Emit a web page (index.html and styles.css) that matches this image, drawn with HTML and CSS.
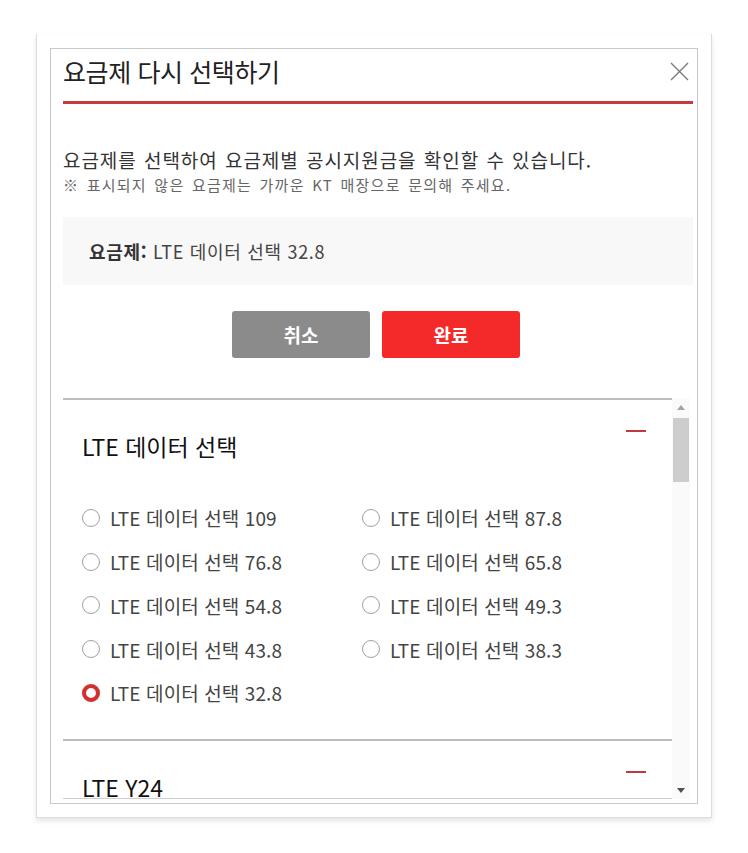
FILE: index.html
```html
<!DOCTYPE html>
<html lang="ko">
<head>
<meta charset="utf-8">
<title>요금제 다시 선택하기</title>
<link rel="stylesheet" href="styles.css">
</head>
<body>
<div class="frame">
  <div class="dialog">
    <div class="dlg-head">
      <h1 class="dlg-title">요금제 다시 선택하기</h1>
      <button class="dlg-close" aria-label="닫기">
        <svg width="19" height="19" viewBox="0 0 19 19"><path d="M1 1 L18 18 M18 1 L1 18" stroke="#7a7a7a" stroke-width="1.4" fill="none"/></svg>
      </button>
    </div>
    <div class="dlg-rule"></div>
    <div class="intro">
      <p class="intro-main">요금제를 선택하여 요금제별 공시지원금을 확인할 수 있습니다.</p>
      <p class="intro-note">※ 표시되지 않은 요금제는 가까운 KT 매장으로 문의해 주세요.</p>
    </div>
    <div class="current"><strong>요금제:</strong> LTE 데이터 선택 32.8</div>
    <div class="actions">
      <button class="btn btn-cancel">취소</button>
      <button class="btn btn-done">완료</button>
    </div>
    <div class="plans">
      <div class="plans-body">
        <section class="group">
          <div class="group-head">
            <h2 class="group-title">LTE 데이터 선택</h2>
            <span class="toggle"></span>
          </div>
          <ul class="options">
            <li class="option"><span class="radio"></span>LTE 데이터 선택 109</li>
            <li class="option"><span class="radio"></span>LTE 데이터 선택 87.8</li>
            <li class="option"><span class="radio"></span>LTE 데이터 선택 76.8</li>
            <li class="option"><span class="radio"></span>LTE 데이터 선택 65.8</li>
            <li class="option"><span class="radio"></span>LTE 데이터 선택 54.8</li>
            <li class="option"><span class="radio"></span>LTE 데이터 선택 49.3</li>
            <li class="option"><span class="radio"></span>LTE 데이터 선택 43.8</li>
            <li class="option"><span class="radio"></span>LTE 데이터 선택 38.3</li>
            <li class="option"><span class="radio is-checked"></span>LTE 데이터 선택 32.8</li>
          </ul>
        </section>
        <section class="group">
          <div class="group-head">
            <h2 class="group-title">LTE Y24</h2>
            <span class="toggle"></span>
          </div>
        </section>
      </div>
      <div class="scrollbar">
        <div class="sb-btn sb-up"></div>
        <div class="sb-track"><div class="sb-thumb"></div></div>
        <div class="sb-btn sb-down"></div>
      </div>
    </div>
  </div>
</div>
</body>
</html>
```

FILE: styles.css
```css
* { box-sizing: border-box; }
html, body { margin: 0; padding: 0; background: #fff; }
body {
  font-family: "Noto Sans CJK KR", "Noto Sans", sans-serif;
  color: #333;
  width: 748px;
  height: 853px;
  overflow: hidden;
}
.frame {
  margin: 34px 0 0 36px;
  width: 676px;
  padding: 14px 13px 13px 13px;
  border: 1px solid #dcdcdc;
  border-top: none;
  box-shadow: 0 3px 5px rgba(0,0,0,0.10);
  background: #fff;
}
.dialog {
  border: 1px solid #c8c8c8;
  padding: 0 4px 4px 12px;
  background: #fff;
}
.dlg-head {
  display: flex;
  align-items: center;
  justify-content: space-between;
  height: 44px;
}
.dlg-title {
  margin: 0;
  font-size: 25px;
  font-weight: 400;
  letter-spacing: -0.4px;
  line-height: 44px;
  color: #222;
}
.dlg-close {
  border: 0;
  background: none;
  padding: 0;
  margin: 0 4px 0 0;
  width: 19px;
  height: 19px;
  display: flex;
}
.dlg-rule {
  margin-top: 8px;
  height: 3px;
  background: #c9393f;
}
.intro { margin-top: 43px; }
.intro p { margin: 0; }
.intro-main {
  font-size: 19px;
  line-height: 26px;
  letter-spacing: 0.95px;
  word-spacing: 1px;
  color: #333;
}
.intro-note {
  font-size: 15px;
  line-height: 24px;
  letter-spacing: 1.25px;
  word-spacing: 2px;
  color: #666;
}
.current {
  margin-top: 20px;
  height: 68px;
  display: flex;
  align-items: center;
  padding-left: 26px;
  background: #f8f8f8;
  font-size: 18px;
  color: #444;
  letter-spacing: 0.7px;
  white-space: pre;
}
.current strong { font-weight: 700; color: #333; }
.actions {
  margin-top: 26px;
  padding-right: 4px;
  display: flex;
  justify-content: center;
  gap: 12px;
}
.btn {
  width: 138px;
  height: 47px;
  border: 0;
  border-radius: 3px;
  color: #fff;
  font-family: inherit;
  font-size: 19px;
  font-weight: 700;
  padding: 0;
}
.btn-cancel { background: #8b8b8b; }
.btn-done { background: #f42a2a; }
.plans {
  margin-top: 40px;
  margin-right: 3px;
  height: 401px;
  display: flex;
}
.plans-body {
  flex: 1;
  overflow: hidden;
  border-top: 2px solid #bdbdbd;
  border-bottom: 1px solid #cfcfcf;
}
.group {
  padding: 28px 26px 24.25px 19px;
  border-bottom: 2px solid #bdbdbd;
}
.group-head {
  display: flex;
  justify-content: space-between;
  align-items: flex-start;
}
.group-title {
  margin: 0;
  font-size: 23px;
  font-weight: 400;
  line-height: 36px;
  color: #111;
}
.toggle {
  width: 20px;
  height: 2px;
  margin-top: 2px;
  background: #c0393e;
}
.options {
  list-style: none;
  margin: 32px 0 0 0;
  padding: 0;
  display: grid;
  grid-template-columns: 280px 280px;
  grid-auto-rows: 43.75px;
}
.option {
  display: flex;
  align-items: center;
  font-size: 19px;
  letter-spacing: 0.1px;
  color: #444;
}
.radio {
  width: 18px;
  height: 18px;
  border: 1.5px solid #a0a0a0;
  border-radius: 50%;
  margin-right: 10px;
  background: #fff;
  flex: none;
}
.radio.is-checked {
  border: 4px solid #d2302f;
  background: radial-gradient(circle, #fff 55%, #f3d6d6 100%);
  box-shadow: 0 0 1px rgba(150,0,0,0.4);
}
.scrollbar {
  width: 18px;
  display: flex;
  flex-direction: column;
  padding-top: 2px;
  background: #fafafa;
}
.sb-btn {
  height: 17px;
  flex: none;
  position: relative;
}
.sb-up::after, .sb-down::after {
  content: "";
  position: absolute;
  left: 5px;
  width: 0;
  height: 0;
  border-left: 4px solid transparent;
  border-right: 4px solid transparent;
}
.sb-up::after { top: 5px; border-bottom: 5px solid #a3a3a3; }
.sb-down::after { top: 6px; border-top: 5px solid #505050; }
.sb-track {
  flex: 1;
  padding-top: 1px;
}
.sb-thumb {
  margin-left: 1px;
  width: 16px;
  height: 64px;
  background: #cdcdcd;
}
```
